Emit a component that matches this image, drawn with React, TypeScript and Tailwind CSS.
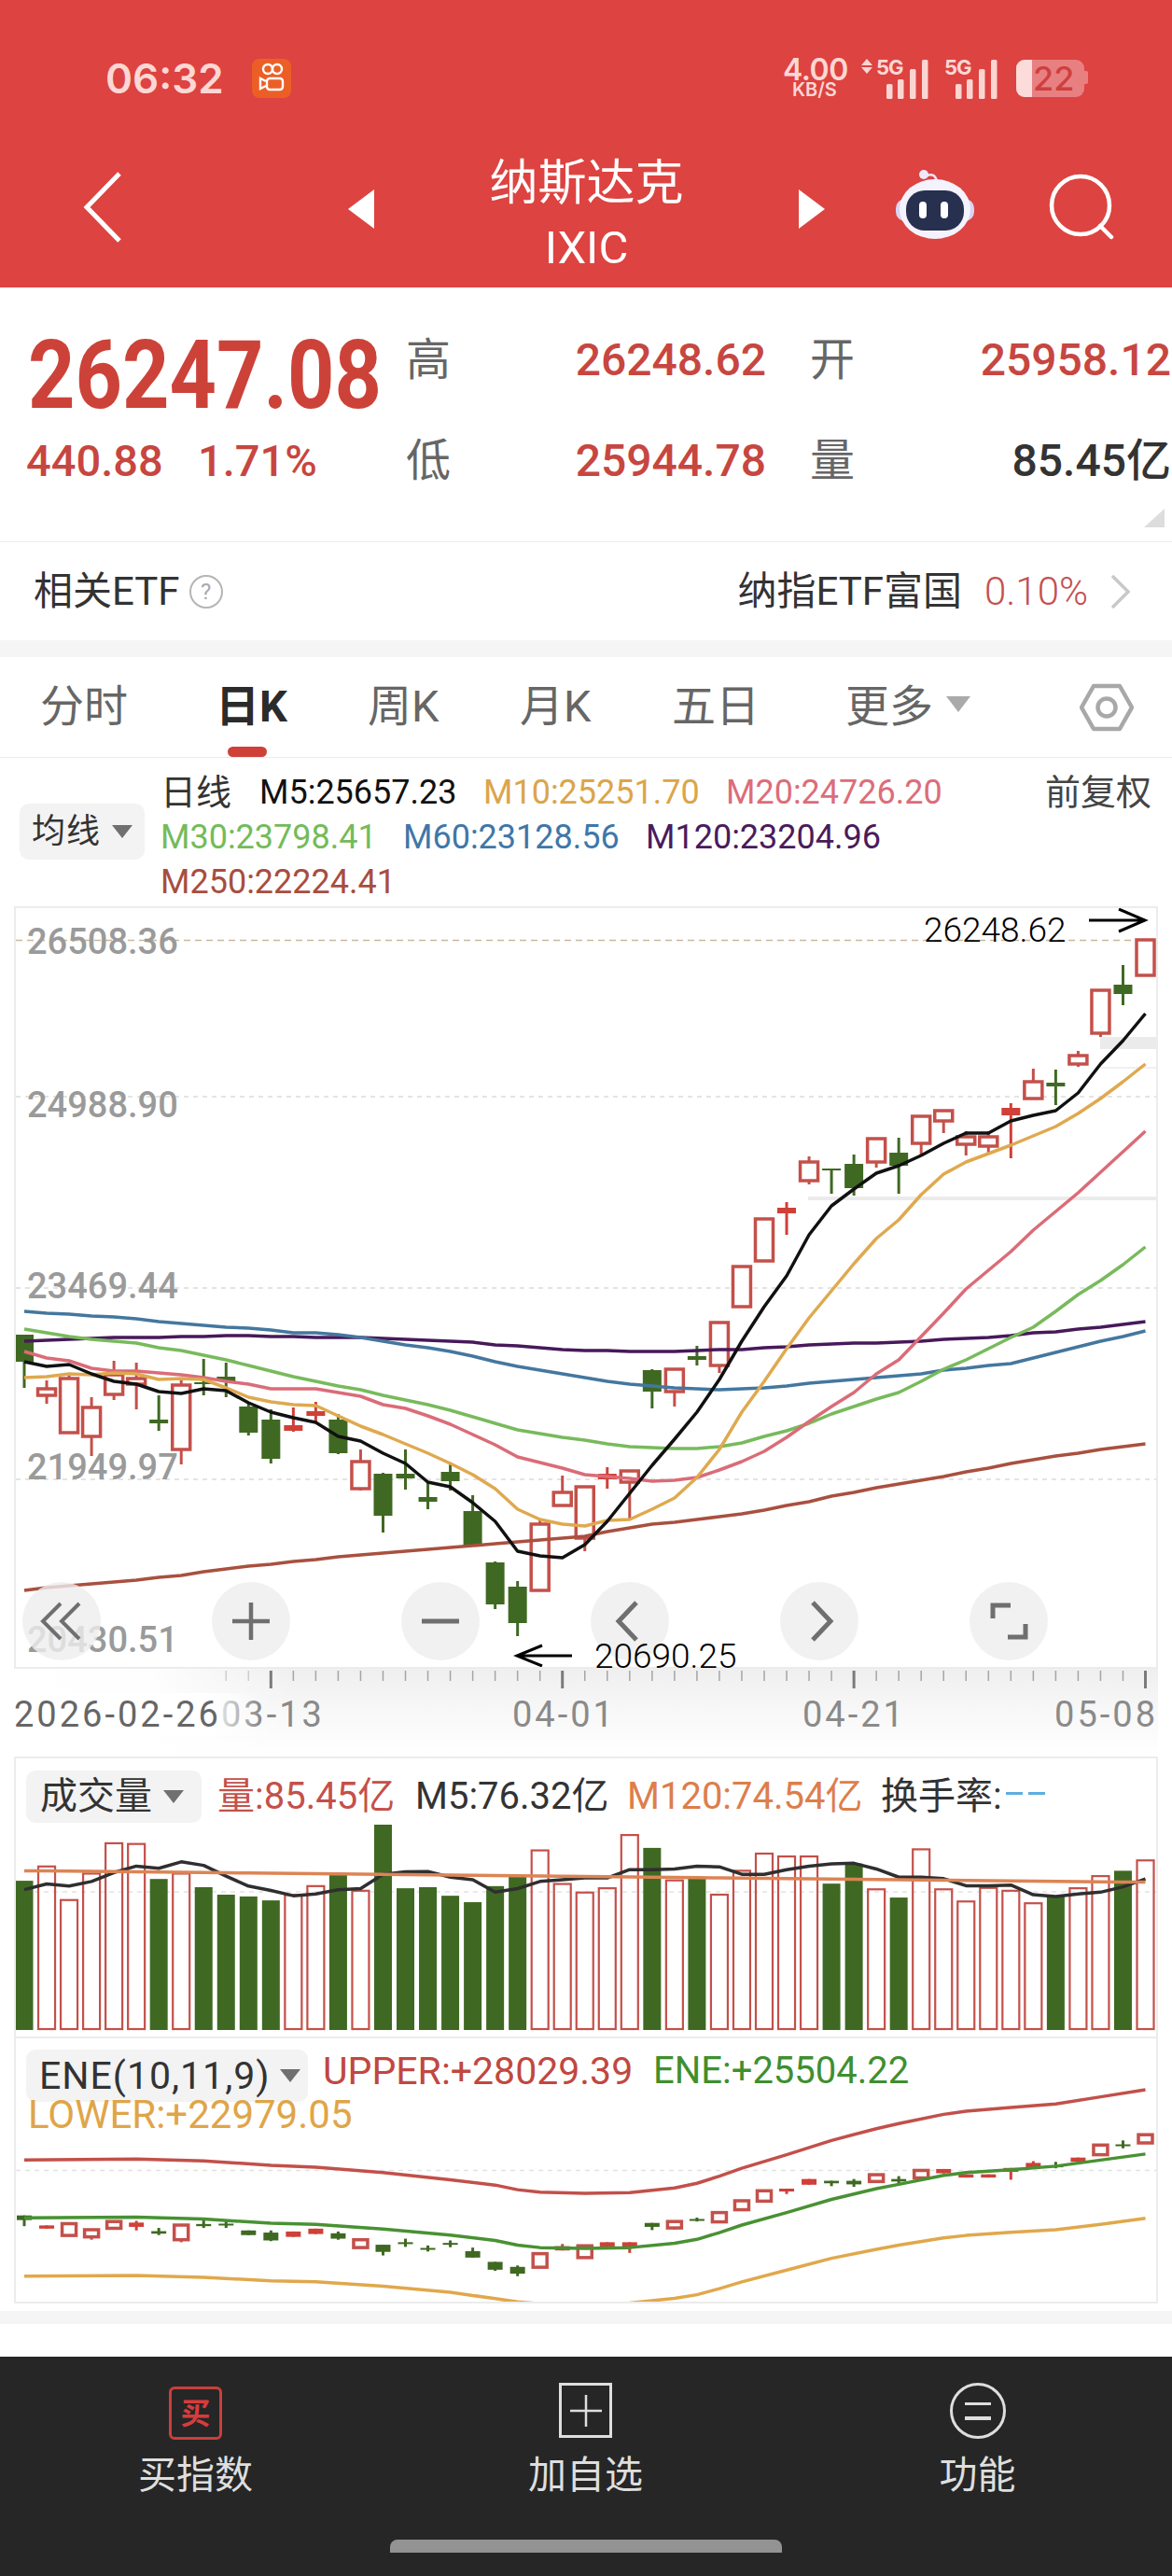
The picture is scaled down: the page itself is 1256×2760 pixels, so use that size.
import { ReactNode } from 'react'

type Kind = 'g' | 'h' | 'r'
type Candle = [Kind, number, number, number, number]

const slotX = (i: number) => 26 + i * 24.03

// [kind, body top, body bottom, wick top, wick bottom]
const candles: Candle[] = [
  ['g', 1430, 1459, 1430, 1487], ['h', 1488, 1495, 1479, 1504], ['h', 1477, 1535, 1473, 1536], ['h', 1508, 1539, 1497, 1560],
  ['h', 1473, 1494, 1458, 1500], ['h', 1477, 1483, 1460, 1510], ['g', 1521, 1525, 1495, 1533], ['h', 1484, 1553, 1479, 1569],
  ['g', 1481, 1483, 1456, 1495], ['g', 1475, 1480, 1460, 1497], ['g', 1507, 1535, 1504, 1538], ['g', 1521, 1563, 1510, 1568],
  ['r', 1527, 1533, 1508, 1534], ['r', 1512, 1517, 1502, 1523], ['g', 1521, 1557, 1515, 1558], ['h', 1566, 1595, 1553, 1597],
  ['g', 1579, 1624, 1578, 1642], ['g', 1579, 1584, 1553, 1596], ['g', 1604, 1609, 1588, 1617], ['g', 1577, 1587, 1568, 1597],
  ['g', 1619, 1656, 1602, 1657], ['g', 1674, 1719, 1673, 1724], ['g', 1700, 1739, 1694, 1753], ['h', 1633, 1704, 1628, 1705],
  ['h', 1599, 1613, 1581, 1613], ['h', 1593, 1648, 1592, 1662], ['r', 1579, 1585, 1572, 1595], ['h', 1576, 1588, 1575, 1628],
  ['g', 1468, 1491, 1467, 1509], ['h', 1467, 1491, 1466, 1507], ['g', 1453, 1457, 1442, 1463], ['h', 1417, 1463, 1416, 1471],
  ['h', 1357, 1400, 1357, 1401], ['h', 1306, 1351, 1306, 1352], ['r', 1294, 1300, 1288, 1323], ['h', 1245, 1265, 1239, 1269],
  ['g', 1252, 1253, 1252, 1279], ['g', 1247, 1273, 1237, 1281], ['h', 1220, 1245, 1220, 1251], ['g', 1235, 1249, 1219, 1279],
  ['h', 1196, 1225, 1195, 1238], ['h', 1190, 1201, 1190, 1214], ['h', 1218, 1226, 1212, 1238], ['h', 1218, 1228, 1212, 1235],
  ['r', 1187, 1195, 1182, 1241], ['h', 1159, 1177, 1145, 1178], ['g', 1160, 1164, 1146, 1184], ['h', 1131, 1140, 1126, 1143],
  ['h', 1061, 1107, 1061, 1111], ['g', 1055, 1065, 1034, 1077], ['h', 1007, 1045, 1007, 1045],
]

const maLines: { color: string; width: number; ys: number[] }[] = [
  { color: '#a9503f', width: 3.5, ys: [1704, 1701, 1699, 1697, 1695, 1693, 1690, 1688, 1684, 1681, 1678, 1676, 1673, 1671, 1668, 1666, 1664, 1662, 1660, 1658, 1656, 1654, 1652, 1650, 1648, 1646, 1641, 1637, 1633, 1631, 1628, 1625, 1622, 1618, 1613, 1609, 1603, 1599, 1594, 1590, 1586, 1582, 1577, 1573, 1568, 1564, 1560, 1557, 1553, 1550, 1547] },
  { color: '#47195a', width: 3.5, ys: [1437, 1436, 1435, 1434, 1433, 1433, 1433, 1432, 1432, 1431, 1431, 1432, 1432, 1433, 1433, 1433, 1434, 1435, 1436, 1437, 1438, 1441, 1442, 1444, 1446, 1447, 1447, 1448, 1448, 1448, 1447, 1446, 1446, 1444, 1443, 1441, 1440, 1439, 1439, 1438, 1437, 1435, 1434, 1433, 1431, 1428, 1427, 1424, 1422, 1419, 1416] },
  { color: '#44779f', width: 3.5, ys: [1405, 1407, 1408, 1410, 1411, 1413, 1416, 1418, 1420, 1422, 1423, 1425, 1428, 1428, 1430, 1433, 1437, 1441, 1444, 1448, 1453, 1459, 1464, 1468, 1472, 1476, 1480, 1483, 1485, 1487, 1488, 1489, 1488, 1487, 1485, 1482, 1480, 1478, 1476, 1474, 1472, 1468, 1466, 1463, 1461, 1455, 1449, 1443, 1437, 1432, 1426] },
  { color: '#78ba5c', width: 3.5, ys: [1424, 1428, 1432, 1435, 1437, 1439, 1444, 1447, 1452, 1457, 1463, 1469, 1475, 1480, 1485, 1489, 1495, 1500, 1505, 1511, 1518, 1525, 1532, 1536, 1540, 1543, 1547, 1550, 1551, 1552, 1552, 1550, 1546, 1539, 1533, 1525, 1515, 1507, 1499, 1492, 1480, 1467, 1457, 1445, 1433, 1422, 1405, 1387, 1372, 1355, 1336] },
  { color: '#da6c78', width: 3.5, ys: [1448, 1455, 1458, 1466, 1469, 1469, 1471, 1473, 1476, 1480, 1483, 1488, 1488, 1488, 1492, 1496, 1505, 1509, 1517, 1526, 1537, 1548, 1561, 1567, 1573, 1580, 1582, 1584, 1587, 1586, 1583, 1575, 1566, 1555, 1540, 1523, 1507, 1492, 1472, 1457, 1432, 1407, 1381, 1361, 1341, 1318, 1298, 1278, 1256, 1234, 1212] },
  { color: '#dfa94f', width: 3.5, ys: [1476, 1475, 1472, 1473, 1471, 1472, 1478, 1477, 1478, 1487, 1497, 1502, 1505, 1506, 1517, 1528, 1537, 1547, 1557, 1568, 1580, 1595, 1617, 1628, 1633, 1635, 1629, 1628, 1617, 1605, 1583, 1553, 1513, 1480, 1445, 1412, 1383, 1354, 1327, 1307, 1280, 1258, 1245, 1236, 1227, 1217, 1207, 1193, 1177, 1159, 1140] },
  { color: '#111111', width: 3.5, ys: [1459, 1464, 1462, 1472, 1480, 1483, 1491, 1493, 1488, 1490, 1503, 1513, 1519, 1524, 1539, 1544, 1557, 1568, 1588, 1593, 1610, 1630, 1662, 1667, 1669, 1655, 1630, 1600, 1570, 1542, 1513, 1478, 1437, 1400, 1367, 1323, 1292, 1274, 1257, 1249, 1238, 1225, 1214, 1214, 1201, 1195, 1190, 1171, 1140, 1115, 1086] },
]

// sub charts are measured from the top of the volume panel
const subY = (v: number) => 1880 + v / 2.613

const volumes: ['g' | 'h', number][] = [
  ['g', 353], ['h', 313], ['h', 407], ['h', 333], ['h', 248], ['h', 250], ['g', 348], ['h', 333], ['g', 371], ['g', 392], ['g', 397], ['g', 408], ['h', 393],
  ['h', 368], ['g', 335], ['h', 381], ['g', 196], ['g', 374], ['g', 371], ['g', 395], ['g', 413], ['g', 368], ['g', 340], ['h', 268], ['h', 362], ['h', 386],
  ['h', 374], ['h', 225], ['g', 261], ['h', 352], ['g', 345], ['h', 392], ['h', 325], ['h', 277], ['h', 285], ['h', 285], ['g', 361], ['g', 305], ['h', 377],
  ['g', 400], ['h', 265], ['h', 377], ['h', 411], ['h', 373], ['h', 381], ['h', 416], ['g', 395], ['h', 374], ['h', 340], ['g', 325], ['h', 296],
]
const volM5 = [378, 362, 368, 355, 330, 312, 318, 300, 310, 340, 368, 380, 395, 390, 378, 375, 335, 328, 327, 343, 350, 385, 375, 355, 350, 345, 345, 322, 322, 320, 312, 314, 335, 335, 322, 312, 306, 304, 320, 343, 343, 347, 367, 367, 365, 392, 397, 390, 385, 370, 348]

const eneCandles: Candle[] = [
  ['g', 1290, 1303, 1290, 1320], ['r', 1318, 1327, 1318, 1327], ['h', 1313, 1346, 1313, 1346], ['h', 1330, 1350, 1330, 1358], ['h', 1307, 1326, 1307, 1326],
  ['r', 1310, 1322, 1305, 1332], ['g', 1334, 1341, 1325, 1345], ['h', 1317, 1358, 1317, 1365], ['g', 1314, 1320, 1303, 1325], ['g', 1313, 1315, 1305, 1325],
  ['g', 1332, 1345, 1332, 1345], ['g', 1338, 1360, 1332, 1362], ['r', 1335, 1350, 1335, 1350], ['r', 1327, 1342, 1327, 1342], ['g', 1340, 1355, 1335, 1358],
  ['h', 1358, 1380, 1355, 1380], ['g', 1372, 1392, 1372, 1402], ['g', 1365, 1368, 1355, 1378], ['g', 1381, 1384, 1374, 1391], ['g', 1367, 1371, 1360, 1379],
  ['g', 1390, 1408, 1380, 1408], ['g', 1420, 1442, 1420, 1445], ['g', 1434, 1453, 1430, 1460], ['h', 1397, 1435, 1397, 1435], ['r', 1376, 1388, 1370, 1388],
  ['h', 1375, 1408, 1375, 1408], ['r', 1365, 1378, 1365, 1378], ['r', 1365, 1378, 1365, 1395], ['g', 1311, 1322, 1311, 1331], ['h', 1307, 1325, 1307, 1330],
  ['g', 1300, 1305, 1296, 1307], ['h', 1282, 1308, 1282, 1308], ['h', 1249, 1274, 1249, 1274], ['h', 1221, 1250, 1221, 1250], ['r', 1215, 1223, 1215, 1230],
  ['r', 1188, 1204, 1188, 1204], ['g', 1193, 1200, 1193, 1208], ['g', 1193, 1203, 1188, 1210], ['h', 1176, 1195, 1176, 1195], ['g', 1188, 1195, 1180, 1205],
  ['h', 1164, 1185, 1164, 1185], ['r', 1160, 1172, 1160, 1172], ['r', 1175, 1184, 1175, 1184], ['r', 1175, 1184, 1175, 1184], ['r', 1157, 1168, 1157, 1190],
  ['r', 1143, 1157, 1138, 1157], ['g', 1150, 1152, 1140, 1158], ['r', 1128, 1140, 1128, 1140], ['h', 1093, 1120, 1093, 1120], ['g', 1091, 1095, 1080, 1102],
  ['h', 1064, 1087, 1064, 1087],
]
const eneIdx = [0, 5, 8, 11, 13, 16, 19, 21, 22, 23, 25, 27, 29, 30, 31, 32, 34, 36, 38, 39, 41, 42, 44, 46, 48, 50]
const eneLines: { color: string; ys: number[] }[] = [
  { color: '#c2504a', ys: [1135, 1132, 1137, 1150, 1155, 1170, 1190, 1205, 1218, 1225, 1228, 1226, 1213, 1200, 1180, 1158, 1120, 1080, 1047, 1033, 1007, 998, 988, 978, 958, 938] },
  { color: '#489133', ys: [1297, 1295, 1300, 1312, 1315, 1328, 1345, 1360, 1373, 1380, 1382, 1380, 1368, 1357, 1338, 1317, 1282, 1245, 1215, 1203, 1178, 1170, 1162, 1152, 1135, 1118] },
  { color: '#e0a84c', ys: [1460, 1458, 1463, 1473, 1476, 1488, 1505, 1523, 1532, 1537, 1538, 1535, 1522, 1512, 1495, 1476, 1443, 1410, 1385, 1373, 1353, 1346, 1337, 1330, 1315, 1298] },
]

const GREEN = '#3f6922'
const RED = '#c4504a'
const RED_FILL = '#cf4038'

function Candles({ data, width, scale }: { data: Candle[]; width: number; scale: (v: number) => number }) {
  return (
    <>
      {data.map(([kind, top, bottom, wickTop, wickBottom], i) => {
        const x = slotX(i)
        const color = kind === 'g' ? GREEN : kind === 'r' ? RED_FILL : RED
        const t = scale(top)
        const b = scale(bottom)
        return (
          <g key={i}>
            <line x1={x} x2={x} y1={scale(wickTop)} y2={scale(wickBottom)} stroke={color} strokeWidth={3} />
            {kind === 'h' ? (
              <rect x={x - width / 2 + 1.5} y={t} width={width - 3} height={b - t} fill="#fff" stroke={color} strokeWidth={3.5} />
            ) : (
              <rect x={x - (width - 2) / 2} y={t} width={width - 2} height={Math.max(b - t, 2)} fill={color} />
            )}
          </g>
        )
      })}
    </>
  )
}

function Triangle({ className }: { className: string }) {
  return <span className={`h-0 w-0 border-x-[11px] border-t-[14px] border-x-transparent ${className}`} />
}

function SelectChip({ label, className }: { label: string; className: string }) {
  return (
    <div className={`flex items-center rounded-[10px] bg-[#f3f3f3] ${className}`}>
      <span className="text-[#333]">{label}</span>
      <Triangle className="border-t-[#707070]" />
    </div>
  )
}

function RoundButton({ children }: { children: ReactNode }) {
  return (
    <div className="flex h-[84px] w-[84px] items-center justify-center rounded-full bg-[#ededed]/80">
      <svg width="50" height="50" viewBox="0 0 50 50" fill="none" stroke="#6f6f6f" strokeWidth="4">
        {children}
      </svg>
    </div>
  )
}

function StatusBar() {
  const bars = [[0, 16], [12, 21], [25, 32], [38, 42]]
  const Signal = () => (
    <svg width="45" height="42" viewBox="0 0 45 42" className="absolute bottom-0 right-0">
      {bars.map(([x, h]) => (
        <rect key={x} x={x} y={42 - h} width="6.5" height={h} rx="1.5" fill="#fbd5d2" />
      ))}
    </svg>
  )
  return (
    <div className="flex h-[168px] items-start pl-[113px] pr-[90px] pt-[60px] font-['Inter','Liberation_Sans',sans-serif] text-[#fcd7d4]">
      <span className="text-[44px] font-semibold leading-[48px]">06:32</span>
      <div className="ml-[30px] mt-[3px] flex h-[42px] w-[42px] items-center justify-center rounded-[8px] bg-[#eb5f27]">
        <svg width="28" height="34" viewBox="0 0 28 34" fill="none" stroke="#fff" strokeWidth="2.4">
          <circle cx="10" cy="7" r="5" />
          <circle cx="20" cy="7" r="5" />
          <rect x="9" y="17" width="17" height="12" rx="3" />
          <path d="M8 20l-6-3v11l6-3" />
        </svg>
      </div>
      <div className="ml-auto mt-[2px] flex h-[44px] w-[327px]">
        <div className="flex w-[84px] flex-col items-start">
          <span className="text-[32px] font-semibold leading-[25px] tracking-[-0.5px]">4.00</span>
          <span className="ml-[10px] text-[20px] font-semibold leading-[19px]">KB/S</span>
        </div>
        <div className="relative w-[72px]">
          <span className="absolute left-0 top-[1px] h-0 w-0 border-x-[6px] border-b-[7px] border-x-transparent border-b-[#fbd5d2]" />
          <span className="absolute left-0 top-[10px] h-0 w-0 border-x-[6px] border-t-[7px] border-x-transparent border-t-[#fbd5d2]" />
          <span className="absolute left-[16px] top-0 text-[22px] font-bold leading-[20px] tracking-[-1px]">5G</span>
          <Signal />
        </div>
        <div className="relative ml-[17px] w-[57px]">
          <span className="absolute left-0 top-0 text-[22px] font-bold leading-[20px] tracking-[-1px]">5G</span>
          <Signal />
        </div>
        <div className="relative ml-[20px] mt-[2px] flex h-[40px] w-[73px] rounded-[9px] bg-[#e88082]">
          <span className="h-full w-[17px] rounded-l-[9px] bg-[#fbdcda]" />
          <span className="ml-[1px] text-[36px] font-medium leading-[40px] text-[#cf3f3d]">22</span>
        </div>
        <span className="mt-[14px] h-[14px] w-[4px] rounded-r-[2px] bg-[#e88082]" />
      </div>
    </div>
  )
}

function Header() {
  return (
    <header className="h-[308px] bg-[#dd4340]">
      <StatusBar />
      <div className="relative flex h-[140px] items-start text-white">
        <svg width="44" height="78" viewBox="0 0 44 78" fill="none" stroke="#fff" strokeWidth="5" className="ml-[88px] mt-[15px]">
          <path d="M40 3L5 39l35 36" />
        </svg>
        <svg width="28" height="42" viewBox="0 0 28 42" className="ml-[241px] mt-[35px]">
          <path d="M28 0v42L0 21z" fill="#fff" />
        </svg>
        <div className="flex w-[455px] flex-col items-center">
          <span className="text-[52px] font-normal leading-[58px]">纳斯达克</span>
          <span className="mt-[15px] text-[49px] font-normal leading-[50px]">IXIC</span>
        </div>
        <svg width="28" height="42" viewBox="0 0 28 42" className="mt-[35px]">
          <path d="M0 0v42l28-21z" fill="#fff" />
        </svg>
        <svg width="88" height="80" viewBox="0 0 88 80" className="ml-[74px] mt-[12px]">
          <path d="M34 9c4-3 11-3 12 6" fill="none" stroke="#e9e6fb" strokeWidth="2.5" />
          <circle cx="32" cy="7" r="5" fill="#ece9fb" />
          <rect x="2" y="33" width="84" height="24" rx="10" fill="#d9d4f4" />
          <ellipse cx="44" cy="44" rx="38" ry="32" fill="#f4f2fd" />
          <rect x="13" y="24" width="62" height="43" rx="20" fill="#27304f" />
          <rect x="27" y="36" width="8" height="18" rx="4" fill="#fff" />
          <rect x="50" y="36" width="8" height="18" rx="4" fill="#fff" />
        </svg>
        <svg width="72" height="72" viewBox="0 0 72 72" fill="none" stroke="#fff" strokeWidth="4.5" className="ml-[78px] mt-[18px]">
          <circle cx="34" cy="34" r="31" />
          <path d="M55 56l12 12" strokeLinecap="round" />
        </svg>
      </div>
    </header>
  )
}

function Quote() {
  const label = 'text-[48px] leading-[108px] text-[#666]'
  const value = 'text-right text-[48px] font-medium leading-[108px] text-[#c74640]'
  return (
    <section className="relative h-[273px] border-b border-[#ebebeb] pt-[24px]">
      <div className="grid grid-cols-[435px_100px_286px_47px_100px_287px] grid-rows-[108px_108px]">
        <div className="pl-[30px] pt-[20px]">
          <span className="inline-block origin-top-left scale-y-[1.15] text-[88px] font-bold leading-[88px] text-[#cc4239]">26247.08</span>
        </div>
        <span className={label}>高</span>
        <span className={value}>26248.62</span>
        <span />
        <span className={label}>开</span>
        <span className={value}>25958.12</span>
        <div className="flex pl-[28px] text-[47px] font-medium leading-[108px] text-[#c74640]">
          <span className="w-[184px]">440.88</span>
          <span>1.71%</span>
        </div>
        <span className={label}>低</span>
        <span className={value}>25944.78</span>
        <span />
        <span className={label}>量</span>
        <span className="text-right text-[48px] font-medium leading-[108px] text-[#333]">85.45亿</span>
      </div>
      <span className="absolute bottom-[15px] right-[8px] h-0 w-0 border-b-[20px] border-l-[22px] border-b-[#ddd] border-l-transparent" />
    </section>
  )
}

function EtfRow() {
  return (
    <div className="flex h-[105px] items-center pl-[36px] pr-[44px] text-[42px] text-[#333]">
      <span>相关ETF</span>
      <span className="ml-[10px] flex h-[36px] w-[36px] items-center justify-center rounded-full border-2 border-[#b5b5b5] text-[24px] text-[#aaa]">?</span>
      <span className="ml-auto">纳指ETF富国</span>
      <span className="ml-[24px] font-light text-[#c4504f]">0.10%</span>
      <svg width="22" height="38" viewBox="0 0 22 38" fill="none" stroke="#c8c8c8" strokeWidth="3.5" className="ml-[24px]">
        <path d="M2 2l17 17L2 36" />
      </svg>
    </div>
  )
}

function Tabs() {
  const tab = 'text-[#666] font-normal'
  return (
    <nav className="relative flex h-[108px] items-center border-b border-[#ebebeb] pl-[43px] text-[47px]">
      <span className={`w-[188px] ${tab}`}>分时</span>
      <span className="w-[163px] font-bold text-[#2b2b2b]">日K</span>
      <span className={`w-[163px] ${tab}`}>周K</span>
      <span className={`w-[163px] ${tab}`}>月K</span>
      <span className={`w-[186px] ${tab}`}>五日</span>
      <span className={tab}>更多</span>
      <span className="ml-[14px] mb-[6px] h-0 w-0 border-x-[13px] border-t-[17px] border-x-transparent border-t-[#aaa]" />
      <svg width="58" height="58" viewBox="0 0 58 58" fill="none" stroke="#a8a8a8" strokeWidth="4.5" className="ml-auto mr-[41px]">
        <path d="M2 29L15 6h28l13 23-13 23H15z" strokeLinejoin="round" />
        <circle cx="29" cy="29" r="9.5" />
      </svg>
      <span className="absolute bottom-0 left-[244px] h-[11px] w-[42px] rounded-full bg-[#cf4038]" />
    </nav>
  )
}

function Legend() {
  const row = 'flex h-[48px] items-center whitespace-nowrap text-[36px]'
  return (
    <div className="flex h-[159px] text-[#111]">
      <div className="w-[172px] pl-[21px] pt-[49px]">
        <SelectChip label="均线" className="h-[60px] w-[134px] pl-[13px] text-[36px] tracking-[1px] [&>span:last-child]:ml-[12px]" />
      </div>
      <div className="flex-1 pt-[13px]">
        <div className={row}>
          <span className="w-[106px] text-[38px] text-[#333]">日线</span>
          <span className="w-[240px]">M5:25657.23</span>
          <span className="w-[260px] text-[#dba54a]">M10:25251.70</span>
          <span className="w-[342px] text-[#dc6d79]">M20:24726.20</span>
          <span className="text-[38px] text-[#444]">前复权</span>
        </div>
        <div className={row}>
          <span className="w-[260px] text-[#74bb5a]">M30:23798.41</span>
          <span className="w-[260px] text-[#3f77a8]">M60:23128.56</span>
          <span className="text-[#4a1b5c]">M120:23204.96</span>
        </div>
        <div className={`${row} text-[#a84d3f]`}>M250:22224.41</div>
      </div>
    </div>
  )
}

function MainChart() {
  const yLabels = [
    { text: '26508.36', cls: 'top-[14px]' },
    { text: '24988.90', cls: 'top-[189px]' },
    { text: '23469.44', cls: 'top-[383px]' },
    { text: '21949.97', cls: 'top-[577px]' },
    { text: '20430.51', cls: 'top-[762px]' },
  ]
  const dash = [[1175], [1380], [1585]]
  return (
    <div className="relative mx-[15px] h-[817px] w-[1226px] border-x-2 border-y-2 border-[#ececec]">
      <svg width="1222" height="813" viewBox="17 973 1222 813" className="block">
        <line x1="17" x2="1239" y1="1007.5" y2="1007.5" stroke="#c9b99b" strokeWidth="1.5" strokeDasharray="7 5" />
        {dash.map(([y]) => (
          <line key={y} x1="17" x2="1239" y1={y} y2={y} stroke="#dcdcdc" strokeWidth="1.5" strokeDasharray="5 5" />
        ))}
        <rect x="1179" y="1111" width="60" height="13" fill="#ebebeb" />
        <line x1="1179" x2="1239" y1="1144" y2="1144" stroke="#ebebeb" strokeWidth="1.5" />
        <rect x="866" y="1282" width="373" height="4" fill="#ebebeb" />
        <Candles data={candles} width={22} scale={(v) => v} />
        {maLines.map((l) => (
          <polyline
            key={l.color}
            points={l.ys.map((y, i) => `${slotX(i)},${y}`).join(' ')}
            fill="none"
            stroke={l.color}
            strokeWidth={l.width}
            strokeLinejoin="round"
          />
        ))}
        <path d="M1167 986h58M1199 974l28 12-28 12" fill="none" stroke="#000" strokeWidth="3" />
        <path d="M613 1774h-58M581 1763l-27 11 27 11" fill="none" stroke="#000" strokeWidth="3" />
      </svg>
      {yLabels.map((l) => (
        <span key={l.text} className={`absolute left-[12px] text-[38px] font-medium leading-[44px] text-[#9a9a9a] ${l.cls}`}>
          {l.text}
        </span>
      ))}
      <div className="absolute left-[7px] top-[722px] flex gap-[119px]">
        <RoundButton>
          <path d="M24 6L5 25l19 19M44 6L25 25l19 19" />
        </RoundButton>
        <RoundButton>
          <path d="M25 5v40M5 25h40" strokeWidth="4.5" />
        </RoundButton>
        <RoundButton>
          <path d="M5 25h40" strokeWidth="5" />
        </RoundButton>
        <RoundButton>
          <path d="M32 5L13 25l19 20" strokeWidth="5" />
        </RoundButton>
        <RoundButton>
          <path d="M18 5l19 20-19 20" strokeWidth="5" />
        </RoundButton>
        <RoundButton>
          <path d="M8 22V8h19M43 28v14H24" strokeWidth="5" />
        </RoundButton>
      </div>
      <span className="absolute left-[973px] top-[2px] text-[37px] font-light leading-[44px] text-black">26248.62</span>
      <span className="absolute left-[620px] top-[780px] text-[37px] font-light leading-[44px] text-black">20690.25</span>
    </div>
  )
}

function DateAxis() {
  const major = [11, 24, 37, 50]
  const date = 'absolute top-[26px] text-[38px] leading-[46px] tracking-[3px] text-[#8a8a8a]'
  return (
    <div className="relative mx-[15px] h-[94px] w-[1226px] bg-gradient-to-b from-[#efefef] via-[#f8f8f8] to-white">
      <div className="absolute inset-y-0 left-0 w-[300px] bg-gradient-to-r from-white via-white/90 to-transparent" />
      <svg width="1226" height="24" viewBox="15 1788 1226 24" className="absolute left-0 top-0">
        {Array.from({ length: 42 }, (_, k) => k + 9).map((i) => (
          <line
            key={i}
            x1={slotX(i)}
            x2={slotX(i)}
            y1="1790"
            y2={major.includes(i) ? 1809 : 1801}
            stroke={major.includes(i) ? '#7b7b7b' : '#a5a5a5'}
            strokeWidth={major.includes(i) ? 3 : 1.5}
            opacity={i < 11 ? 0.5 : 1}
          />
        ))}
      </svg>
      <span className={`${date} left-[222px]`}>03-13</span>
      <span className="absolute left-0 top-[26px] bg-gradient-to-r from-white from-[78%] to-transparent pr-[42px] text-[38px] leading-[46px] tracking-[3px] text-[#666]">2026-02-26</span>
      <span className={`${date} left-[534px]`}>04-01</span>
      <span className={`${date} left-[845px]`}>04-21</span>
      <span className={`${date} right-0`}>05-08</span>
    </div>
  )
}

function VolumePanel() {
  const base = 2175
  const m120 = (i: number) => 325 + (i / 50) * 32
  return (
    <div className="relative mx-[15px] h-[300px] w-[1226px] border-x-2 border-t-2 border-[#ececec]">
      <svg width="1222" height="298" viewBox="17 1884 1222 298" className="block">
        <line x1="17" x2="1239" y1="2027" y2="2027" stroke="#e2e2e2" strokeWidth="1.5" strokeDasharray="5 5" />
        {volumes.map(([kind, top], i) => {
          const x = slotX(i)
          const t = subY(top)
          return kind === 'g' ? (
            <rect key={i} x={x - 9.5} y={t} width="19" height={base - t} fill={GREEN} />
          ) : (
            <rect key={i} x={x - 9} y={t} width="18" height={base - t - 1} fill="none" stroke={RED} strokeWidth="2.2" />
          )
        })}
        <polyline points={volM5.map((v, i) => `${slotX(i)},${subY(v)}`).join(' ')} fill="none" stroke="#2f2f2f" strokeWidth="3.5" strokeLinejoin="round" />
        <polyline points={volM5.map((_, i) => `${slotX(i)},${subY(m120(i))}`).join(' ')} fill="none" stroke="#dc8455" strokeWidth="3.5" />
      </svg>
      <div className="absolute left-[11px] top-[11px] flex items-center whitespace-nowrap text-[40px]">
        <SelectChip label="成交量" className="h-[56px] w-[188px] pl-[15px] [&>span:last-child]:ml-[12px]" />
        <span className="ml-[17px] w-[212px] text-[#c4504a]">量:85.45亿</span>
        <span className="w-[227px] text-[#333]">M5:76.32亿</span>
        <span className="w-[272px] text-[#dd7e4b]">M120:74.54亿</span>
        <span className="text-[#333]">换手率:</span>
        <span className="mb-[8px] ml-[4px] flex gap-[6px]">
          <span className="h-[3px] w-[18px] bg-[#5eaee0]" />
          <span className="h-[3px] w-[18px] bg-[#5eaee0]" />
        </span>
      </div>
    </div>
  )
}

function EnePanel() {
  return (
    <div className="relative mx-[15px] h-[286px] w-[1226px] border-x-2 border-y-2 border-[#ececec]">
      <svg width="1222" height="282" viewBox="17 2184 1222 282" className="block">
        <line x1="17" x2="1239" y1="2325.5" y2="2325.5" stroke="#e2e2e2" strokeWidth="1.5" strokeDasharray="5 5" />
        <Candles data={eneCandles} width={18} scale={subY} />
        {eneLines.map((l) => (
          <polyline
            key={l.color}
            points={l.ys.map((v, k) => `${slotX(eneIdx[k])},${subY(v)}`).join(' ')}
            fill="none"
            stroke={l.color}
            strokeWidth="3.5"
            strokeLinejoin="round"
          />
        ))}
      </svg>
      <div className="absolute left-[11px] top-[12px] flex items-start whitespace-nowrap text-[40px] leading-[46px]">
        <SelectChip label="ENE(10,11,9)" className="h-[56px] w-[302px] pl-[14px] text-[41px] tracking-[1px] [&>span:last-child]:ml-[10px]" />
        <span className="ml-[16px] w-[354px] text-[41px] text-[#c0483f]">UPPER:+28029.39</span>
        <span className="text-[#3f8f2f]">ENE:+25504.22</span>
      </div>
      <span className="absolute left-[13px] top-[59px] text-[42px] leading-[46px] text-[#dfa548]">LOWER:+22979.05</span>
    </div>
  )
}

function BottomBar() {
  const label = 'mt-[14px] text-[41px] leading-[48px] text-[#dedede]'
  return (
    <footer className="relative h-[235px] bg-[#262626]">
      <div className="flex pt-[28px]">
        <div className="ml-[148px] flex w-[123px] flex-col items-center">
          <div className="mt-[4px] flex h-[57px] w-[57px] items-center justify-center rounded-[6px] border-[3px] border-[#c9403c] text-[32px] font-bold leading-none text-[#d63c3c]">买</div>
          <span className={label}>买指数</span>
        </div>
        <div className="ml-[295px] flex w-[123px] flex-col items-center">
          <div className="flex h-[59px] w-[57px] items-center justify-center border-[3px] border-[#dedede]">
            <svg width="34" height="34" viewBox="0 0 34 34" stroke="#dedede" strokeWidth="2.5">
              <path d="M17 0v34M0 17h34" />
            </svg>
          </div>
          <span className={`${label} !mt-[16px]`}>加自选</span>
        </div>
        <div className="ml-[297px] flex w-[123px] flex-col items-center">
          <div className="flex h-[60px] w-[60px] flex-col items-center justify-center gap-[12px] rounded-full border-[3px] border-[#dedede]">
            <span className="h-[3.5px] w-[28px] bg-[#dedede]" />
            <span className="h-[3.5px] w-[28px] bg-[#dedede]" />
          </div>
          <span className={`${label} !mt-[15px]`}>功能</span>
        </div>
      </div>
      <div className="absolute left-[418px] top-[196px] h-[14px] w-[420px] rounded-t-[8px] bg-[#939393]" />
    </footer>
  )
}

export default function App() {
  return (
    <div className="h-[2760px] w-[1256px] overflow-hidden bg-white font-['Roboto','Noto_Sans_CJK_SC',sans-serif]">
      <Header />
      <Quote />
      <EtfRow />
      <div className="h-[18px] bg-[#f5f5f5]" />
      <Tabs />
      <Legend />
      <MainChart />
      <DateAxis />
      <VolumePanel />
      <EnePanel />
      <div className="mt-[8px] h-[14px] bg-[#f5f5f5]" />
      <div className="h-[35px]" />
      <BottomBar />
    </div>
  )
}
